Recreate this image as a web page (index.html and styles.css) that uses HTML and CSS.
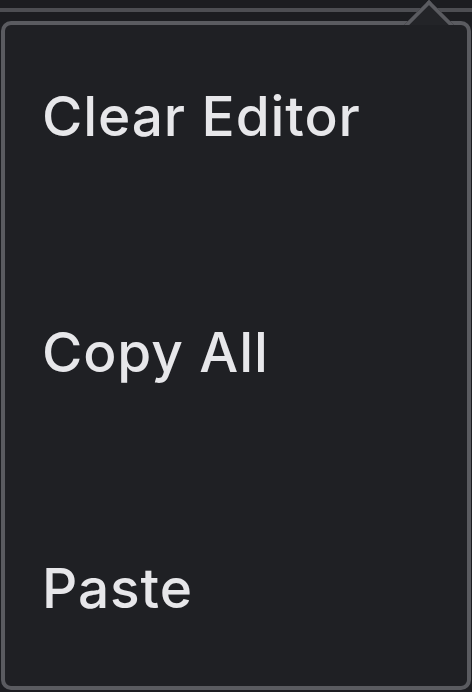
FILE: index.html
```html
<!DOCTYPE html>
<html lang="en">
<head>
    <meta charset="UTF-8">
    <meta name="viewport" content="width=device-width, initial-scale=1.0">
    <title>Editor Menu</title>
    <link rel="stylesheet" href="styles.css">
</head>
<body>
    <div class="toolbar"></div>

    <div class="menu">
        <span class="menu__caret"></span>
        <ul class="menu__list">
            <li class="menu__item">Clear Editor</li>
            <li class="menu__item">Copy All</li>
            <li class="menu__item">Paste</li>
        </ul>
    </div>
</body>
</html>
```

FILE: styles.css
```css
body {
    font-family: Inter, 'Noto Sans', sans-serif;
    margin: 0;
    width: 472px;
    height: 692px;
    background-color: #1c1d21;
    color: #e7e7ea;
    overflow: hidden;
}

.toolbar {
    height: 8px;
    border-bottom: 4px solid #4d4e53;
}

.menu {
    position: relative;
    box-sizing: border-box;
    height: 669px;
    margin: 9px 1px 0 1px;
    border: 4px solid #5a5b60;
    border-radius: 10px;
    background-color: #1f2024;
}

/* little pointer up to the button, only its upper half shows */
.menu__caret {
    position: absolute;
    top: -18px;
    right: 20px;
    width: 32px;
    height: 32px;
    background-color: #232428;
    border-top: 4px solid #5a5b60;
    border-left: 4px solid #5a5b60;
    transform: rotate(45deg);
    clip-path: polygon(0 0, 100% 0, 0 100%);
}

.menu__list {
    list-style: none;
    margin: 0;
    padding: 63px 0 0 37px;
    display: flex;
    flex-direction: column;
    gap: 180px;
}

.menu__item {
    font-size: 55px;
    line-height: 56px;
    font-weight: 500;
    letter-spacing: 0.9px;
    cursor: pointer;
}
```
